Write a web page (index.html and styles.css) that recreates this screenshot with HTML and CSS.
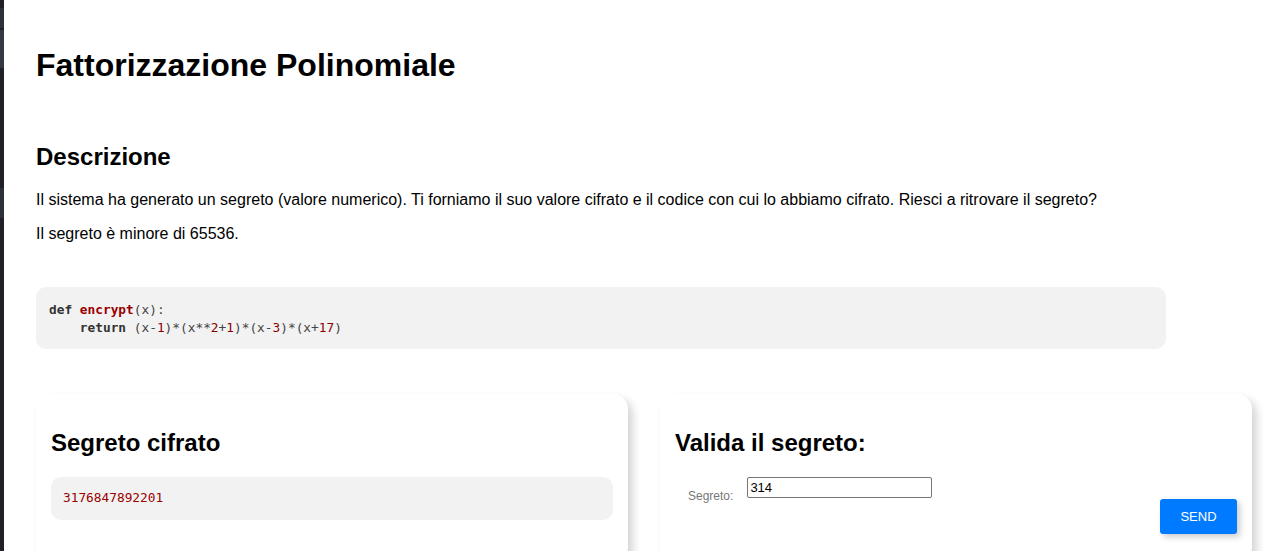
FILE: index.html
```html
<!DOCTYPE html>
<html lang="it">
<head>
<meta charset="utf-8">
<title>Fattorizzazione Polinomiale</title>
<link rel="stylesheet" href="styles.css">
</head>
<body>
<div class="layout">
  <aside class="sidebar">
    <span class="seg seg1"></span>
    <span class="seg seg2"></span>
    <span class="seg seg3"></span>
  </aside>
  <main class="main">
    <h1 class="title">Fattorizzazione Polinomiale</h1>
    <h2 class="section-title">Descrizione</h2>
    <p class="text">Il sistema ha generato un segreto (valore numerico). Ti forniamo il suo valore cifrato e il codice con cui lo abbiamo cifrato. Riesci a ritrovare il segreto?</p>
    <p class="text">Il segreto è minore di 65536.</p>
    <pre class="code"><code><span class="kw">def</span> <span class="fn">encrypt</span>(x):
    <span class="kw">return</span> (x-<span class="num">1</span>)*(x**<span class="num">2</span>+<span class="num">1</span>)*(x-<span class="num">3</span>)*(x+<span class="num">17</span>)</code></pre>
    <div class="cards">
      <section class="card">
        <h2 class="card-title">Segreto cifrato</h2>
        <div class="cipher"><code>3176847892201</code></div>
      </section>
      <section class="card">
        <h2 class="card-title">Valida il segreto:</h2>
        <form class="form">
          <label class="label" for="secret">Segreto:</label>
          <input class="input" id="secret" type="text" value="314">
        </form>
        <div class="actions"><button class="btn" type="button">SEND</button></div>
      </section>
    </div>
  </main>
</div>
</body>
</html>
```
FILE: styles.css
```css
* { box-sizing: border-box; }
html, body { margin: 0; padding: 0; }
body {
  background: #ffffff;
  font-family: "Liberation Sans", Arial, sans-serif;
  color: #000;
  overflow: hidden;
}
.layout {
  display: flex;
  min-height: 551px;
}
.sidebar {
  width: 4px;
  flex: 0 0 4px;
  background: #1f2127;
  display: flex;
  flex-direction: column;
}
.seg { display: block; width: 4px; background: #2c3038; }
.seg1 { margin-top: 8px; height: 20px; }
.seg2 { margin-top: 2px; height: 38px; background: #333842; }
.seg3 { margin-top: 120px; height: 30px; }
.main {
  flex: 1;
  padding: 0 21px 0 32px;
}
.title {
  font-size: 32px;
  font-weight: bold;
  margin: 47px 0 0;
  line-height: 37px;
}
.section-title {
  font-size: 24px;
  font-weight: bold;
  margin: 59px 0 0;
  line-height: 28px;
}
.text {
  font-size: 16px;
  line-height: 18px;
  margin: 20px 0 0;
}
.text + .text { margin-top: 16px; }
.code {
  width: 1130px;
  margin: 44px 0 0;
  background: #f2f2f2;
  border-radius: 10px;
  padding: 14px 13px 12px;
  font-family: "DejaVu Sans Mono", monospace;
  font-size: 12.8px;
  line-height: 18px;
  color: #444;
}
.kw { color: #333; font-weight: bold; }
.fn { color: #990000; font-weight: bold; }
.num { color: #880000; }
.cards {
  display: grid;
  grid-template-columns: 592px 592px;
  column-gap: 32px;
  margin-top: 45px;
}
.card {
  background: #fff;
  border-radius: 15px;
  box-shadow: 5px 5px 8px rgba(0,0,0,0.17);
  padding: 35px 15px 28px;
  min-height: 154px;
}
.card-title {
  font-size: 24px;
  font-weight: bold;
  margin: 0;
  line-height: 28px;
}
.cipher {
  margin-top: 20px;
  background: #f2f2f2;
  border-radius: 10px;
  padding: 12px 12px 14px;
  font-family: "DejaVu Sans Mono", monospace;
  font-size: 12.8px;
  line-height: 17px;
  color: #990000;
}
.cipher code { font-family: inherit; }
.form {
  display: flex;
  align-items: flex-start;
  margin-top: 20px;
  padding-left: 13px;
}
.label {
  font-size: 12px;
  color: #777;
  margin-top: 12px;
  margin-right: 14px;
}
.input {
  width: 185px;
  height: 21px;
  border: 1px solid #767676;
  border-radius: 2px;
  padding: 0 2px;
  font-family: "Liberation Sans", Arial, sans-serif;
  font-size: 13px;
  color: #000;
}
.actions {
  display: flex;
  justify-content: flex-end;
  margin-top: -4px;
}
.btn {
  width: 77px;
  height: 35px;
  background: #007bff;
  color: #fff;
  border: none;
  border-radius: 3px;
  font-family: "Liberation Sans", Arial, sans-serif;
  font-size: 13px;
  box-shadow: 3px 3px 6px rgba(0,0,0,0.2);
}
```
